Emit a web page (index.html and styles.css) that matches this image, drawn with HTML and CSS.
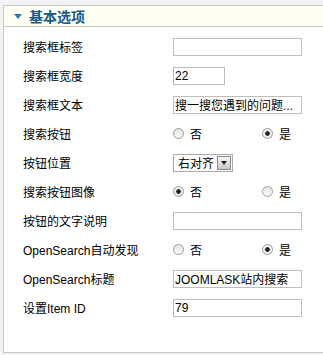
FILE: index.html
```html
<!DOCTYPE html>
<html lang="zh-CN">
<head>
    <meta charset="UTF-8">
    <title>基本选项</title>
    <link rel="stylesheet" href="styles.css">
</head>
<body>
    <div class="panel">
        <div class="panel-head">
            <span class="arrow"></span>
            <span class="panel-title">基本选项</span>
        </div>
        <div class="form">
            <div class="row">
                <label>搜索框标签</label>
                <div><input type="text" class="field"></div>
            </div>
            <div class="row">
                <label>搜索框宽度</label>
                <div><input type="text" class="field short" value="22"></div>
            </div>
            <div class="row">
                <label>搜索框文本</label>
                <div><input type="text" class="field" value="搜一搜您遇到的问题..."></div>
            </div>
            <div class="row">
                <label>搜索按钮</label>
                <div class="choice">
                    <span class="opt"><input type="radio" name="btn"> 否</span>
                    <span class="opt"><input type="radio" name="btn" checked> 是</span>
                </div>
            </div>
            <div class="row">
                <label>按钮位置</label>
                <div>
                    <div class="select"><span class="select-text">右对齐</span><span class="select-btn"><i></i></span></div>
                </div>
            </div>
            <div class="row">
                <label>搜索按钮图像</label>
                <div class="choice">
                    <span class="opt"><input type="radio" name="img" checked> 否</span>
                    <span class="opt"><input type="radio" name="img"> 是</span>
                </div>
            </div>
            <div class="row">
                <label>按钮的文字说明</label>
                <div><input type="text" class="field"></div>
            </div>
            <div class="row">
                <label>OpenSearch自动发现</label>
                <div class="choice">
                    <span class="opt"><input type="radio" name="os"> 否</span>
                    <span class="opt"><input type="radio" name="os" checked> 是</span>
                </div>
            </div>
            <div class="row">
                <label>OpenSearch标题</label>
                <div><input type="text" class="field" value="JOOMLASK站内搜索"></div>
            </div>
            <div class="row">
                <label>设置Item ID</label>
                <div><input type="text" class="field" value="79"></div>
            </div>
        </div>
    </div>
</body>
</html>
```

FILE: styles.css
```css
*{
    margin: 0;
    padding: 0;
    box-sizing: border-box;
}
body{
    background-color: #f3f3f5;
    font-family: "Liberation Sans", "Noto Sans CJK SC", sans-serif;
    font-size: 12px;
    color: #000;
    overflow: hidden;
}
.panel{
    margin: 5px 0 0 3px;
    width: 330px;
    height: 348px;
    background-color: #fff;
    border: 1px solid #c8c8c8;
    border-right: none;
}
.panel-head{
    height: 21px;
    background-color: #fffff3;
    border-bottom: 1px solid #c8c8c8;
    display: flex;
    align-items: center;
    padding-left: 10px;
}
.arrow{
    width: 0;
    height: 0;
    border-left: 4px solid transparent;
    border-right: 4px solid transparent;
    border-top: 5px solid #2f7ab8;
    margin-right: 7px;
}
.panel-title{
    font-size: 14px;
    font-weight: bold;
    color: #175a8c;
}
.form{
    padding: 5px 0 0 19px;
}
.row{
    display: grid;
    grid-template-columns: 150px 1fr;
    align-items: center;
    height: 29px;
}
.field{
    width: 129px;
    height: 18px;
    border: 1px solid #bdbdbd;
    padding: 0 1px;
    font-family: "Liberation Sans", "Noto Sans CJK SC", sans-serif;
    font-size: 12px;
    color: #000;
    outline: none;
}
.short{
    width: 52px;
}
.choice{
    display: grid;
    grid-template-columns: 89px 60px;
}
.opt{
    display: flex;
    align-items: center;
    gap: 6px;
}
.opt input{
    appearance: none;
    width: 11px;
    height: 11px;
    border: 1px solid #9a9a9a;
    border-radius: 50%;
    background: linear-gradient(#e4e4e4, #fbfbfb);
}
.opt input:checked{
    background: radial-gradient(circle, #222 0, #222 2px, #e8e8e8 2.5px, #fafafa 100%);
}
.select{
    display: inline-flex;
    align-items: center;
    width: 60px;
    height: 18px;
    border: 1px solid #aaa;
    padding: 0 1px 0 4px;
    justify-content: space-between;
}
.select-btn{
    width: 14px;
    height: 14px;
    border: 1px solid #8d8d8d;
    background: linear-gradient(#f6f6f6, #c9c9c9);
    display: flex;
    align-items: center;
    justify-content: center;
}
.select-btn i{
    width: 0;
    height: 0;
    border-left: 3px solid transparent;
    border-right: 3px solid transparent;
    border-top: 4px solid #222;
}
```
